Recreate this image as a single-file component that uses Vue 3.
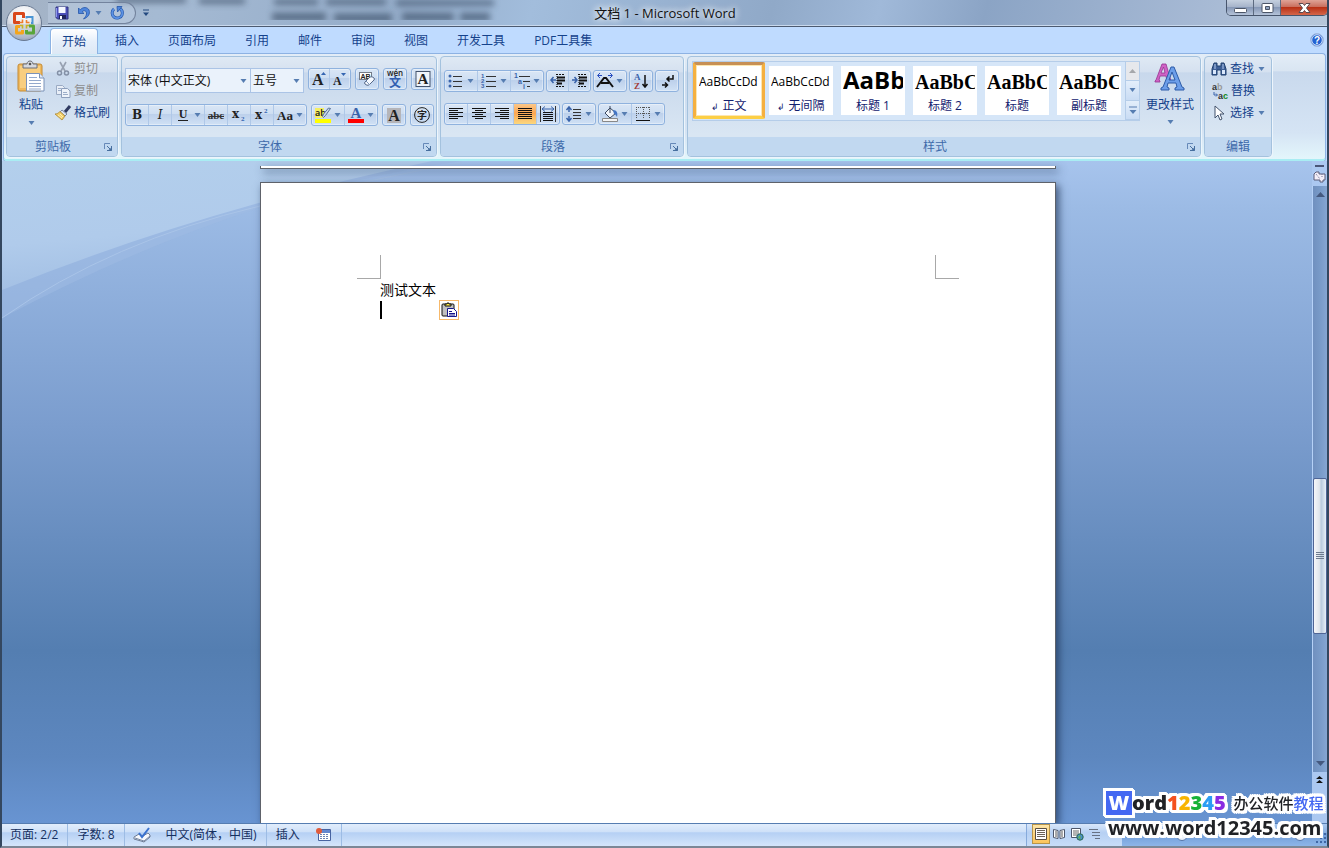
<script setup>
import { computed, h, ref } from 'vue'

// [width, height, markup]
const icons = {
  arrow: [7, 4, '<path d="M0.500 0h6L3.500 4z" fill="#567db1"/>'],
  save: [14, 14, '<path d="M1 1h12v12H2.500L1 11.500z" fill="#4b4fb8" stroke="#30347f"/><path d="M3.500 1h7v6h-7z" fill="#f4f7ff"/><path d="M4 9h7v4H4z" fill="#20265c"/><path d="M5 10h2v3H5z" fill="#fff"/><path d="M1.500 2v9" stroke="#8d97ee"/>'],
  undo: [14, 14, '<path d="M1.500 2v5.500H7L5.200 5.800C7 3.500 10 5 9.500 8c-.3 2-1.500 3.500-3 5 4.500-1.500 7-5 5.500-9C10.500 1 6 .5 3.300 3.800z" fill="#4f86dc" stroke="#2456a8" stroke-width=".8"/>'],
  redo: [14, 14, '<path d="M4 3C1.500 5 1.500 9 4 11s7 1 8-2 0-5-2-6.500" fill="none" stroke="#2456a8" stroke-width="3"/><path d="M4 3C1.500 5 1.500 9 4 11s7 1 8-2 0-5-2-6.500" fill="none" stroke="#5c92e4" stroke-width="1.800"/><path d="M7 .5h5L7.500 6z" fill="#4f86dc" stroke="#2456a8" stroke-width=".8"/>'],
  more: [8, 8, '<path d="M1 1h6" stroke="#23497f"/><path d="M1 3.500h6L4 7z" fill="#23497f"/>'],
  paste: [28, 32, '<rect x="1" y="3" width="24" height="27" rx="2" fill="#efb95e" stroke="#c48a35"/><path d="M3 5h20v22H3z" fill="#f8ce80"/><path d="M6 3h4c0-4 6-4 6 0h4v4H6z" fill="#d5d8de" stroke="#6a6f78"/><circle cx="13" cy="3" r="1.300" fill="#555"/><path d="M9.500 12.500h13l4.500 4.500v13H9.500z" fill="#fff" stroke="#7b92b8"/><path d="M22.500 12.500V17H27" fill="#dfe9f8" stroke="#7b92b8"/><path d="M12 16.500h8m-8 3h12m-12 3h12m-12 3h12m-12 2.500h12" stroke="#94a9cc"/>'],
  cut: [16, 16, '<path d="M5 1l5 9M11 1l-5 9" stroke="#98a2b2" stroke-width="1.600" fill="none"/><circle cx="4.500" cy="12" r="2" fill="none" stroke="#8390a6" stroke-width="1.500"/><circle cx="11.500" cy="12" r="2" fill="none" stroke="#8390a6" stroke-width="1.500"/>'],
  copy: [16, 16, '<path d="M1.500 2.500h6l2 2v7h-8z" fill="#e8eef7" stroke="#9aaac3"/><path d="M6.500 5.500h6l2.500 2.500v6.500H6.500z" fill="#eef3fa" stroke="#8d9fbc"/><path d="M3 5.500h3M3 7.500h3M8 9.500h4m-4 2h5" stroke="#9cadc8"/>'],
  brush: [16, 16, '<path d="M15 1l-5 6" stroke="#303b62" stroke-width="3"/><path d="M7 5l5 4-2 2-5-4z" fill="#d9e2f2" stroke="#5c6c8c" stroke-width=".8"/><path d="M5 6.500l5 4.500-3 4L0 9c2 0 3.500-1 5-2.500z" fill="#f2cd67" stroke="#a88634" stroke-width=".8"/><path d="M3 10l4 3M5 9l3 3" stroke="#fff1ad"/>'],
  grow: [14, 16, '<text x="0" y="14" font-size="16" font-weight="700" font-family="Liberation Serif" fill="#222">A</text><path d="M9 4l2.500-3L14 4z" fill="#3566b2"/>'],
  shrink: [14, 16, '<text x="0" y="14" font-size="12" font-weight="700" font-family="Liberation Serif" fill="#222">A</text><path d="M8 2h5l-2.500 3z" fill="#3566b2"/>'],
  clear: [16, 16, '<rect x=".5" y="1.500" width="12" height="7" fill="#fff" stroke="#737b88"/><text x="1.500" y="7.500" font-size="7" font-weight="700" font-family="Liberation Sans" fill="#222">AB</text><path d="M6 11l5-5q2-1 4 1 1 1 0 2l-5 5q-2 1-4-1-1-1 0-2z" fill="#f5f9ff" stroke="#566989"/><path d="M7 10l4 4" stroke="#8098ba"/>'],
  phonetic: [18, 18, '<text x="9" y="6" text-anchor="middle" font-size="8" font-weight="600" font-family="Open Sans" fill="#222">wén</text><text x="9" y="17" text-anchor="middle" font-size="12" font-weight="700" font-family="Noto Sans CJK SC" fill="#315eb0">文</text>'],
  charBorder: [16, 16, '<rect x="1" y=".5" width="14" height="15" fill="#eff4fb" stroke="#43536d"/><text x="8" y="13" text-anchor="middle" font-size="15" font-weight="700" font-family="Liberation Serif" fill="#222">A</text>'],
  bold: [16, 16, '<text x="8" y="12" text-anchor="middle" font-size="12" font-weight="700" font-family="DejaVu Serif,Liberation Serif" fill="#222">B</text>'],
  italic: [16, 16, '<text x="8" y="12" text-anchor="middle" font-size="12" font-style="italic" font-family="DejaVu Serif,Liberation Serif" fill="#222">I</text>'],
  underline: [16, 16, '<text x="8" y="11" text-anchor="middle" font-size="12" font-weight="700" font-family="Liberation Serif" fill="#222">U</text><path d="M3 13.500h10" stroke="#222" stroke-width="1"/>'],
  strike: [16, 16, '<text x="8" y="12" text-anchor="middle" font-size="11" font-weight="700" font-family="Liberation Serif" fill="#333">abc</text><path d="M0 9.500h16" stroke="#333"/>'],
  sub: [16, 16, '<text x="1" y="11" font-size="12" font-weight="700" font-family="DejaVu Serif,Liberation Serif" fill="#222">x</text><text x="10" y="14" font-size="7" font-weight="700" font-family="Liberation Serif" fill="#3566b2">2</text>'],
  sup: [16, 16, '<text x="1" y="12" font-size="12" font-weight="700" font-family="DejaVu Serif,Liberation Serif" fill="#222">x</text><text x="10" y="6" font-size="7" font-weight="700" font-family="Liberation Serif" fill="#3566b2">2</text>'],
  caseAa: [16, 16, '<text x="0" y="13" font-size="13" font-weight="700" font-family="Liberation Serif" fill="#222">Aa</text>'],
  highlight: [16, 16, '<path d="M0 1h9v10H0z" fill="#f5ef62"/><text x="0" y="9" font-size="9" font-family="Open Sans" font-weight="600" fill="#111">ab</text><path d="M15.500 1.500l-5 7-2 2-1-1 1-2.500 5-6z" fill="#c9d7ec" stroke="#566f95"/><path d="M0 12h16v4H0z" fill="#ff0"/>'],
  fontColor: [16, 16, '<text x="8" y="11" text-anchor="middle" font-size="15" font-weight="700" font-family="Liberation Serif" fill="#3963aa">A</text><path d="M0 12h16v4H0z" fill="#f00"/>'],
  shade: [16, 16, '<path d="M1 1h14v15H1z" fill="#b5b5b9"/><text x="8" y="14" text-anchor="middle" font-size="16" font-weight="700" font-family="Liberation Serif" fill="#222">A</text>'],
  circled: [16, 16, '<circle cx="8" cy="8" r="7.400" fill="none" stroke="#222"/><text x="8" y="12" text-anchor="middle" font-size="10" font-weight="700" font-family="Noto Sans CJK SC" fill="#222">字</text>'],
  bullets: [16, 16, '<g fill="#3963aa"><circle cx="2" cy="3" r="1.500"/><circle cx="2" cy="8" r="1.500"/><circle cx="2" cy="13" r="1.500"/></g><path d="M5 3.500h9m-9 5h9m-9 5h9" stroke="#333"/>'],
  numbers: [16, 16, '<g font-size="6" font-weight="700" font-family="Liberation Sans" fill="#3963aa"><text y="5">1</text><text y="10">2</text><text y="15">3</text></g><path d="M5 3.500h10m-10 5h10m-10 5h10" stroke="#333"/>'],
  multi: [16, 16, '<g font-size="7" font-weight="700" font-family="Liberation Sans" fill="#3963aa"><text y="5">1</text><text x="4" y="11">a</text><text x="9" y="16">i</text></g><path d="M5 3.500h11m-7 5h7m-3 5h3" stroke="#333"/>'],
  outdent: [15, 16, '<path d="M6 1.500h9M6 13.500h9" stroke="#111" stroke-dasharray="2 1"/><path d="M7 4.500h8M7 7.500h8M7 10.500h5" stroke="#111" stroke-width="2"/><path d="M7 1v14" stroke="#111" stroke-dasharray="1 1"/><path d="M6 7H1m2.500-3L1 7l2.500 3" stroke="#3963aa" stroke-width="1.500" fill="none"/>'],
  indent: [15, 16, '<path d="M6 1.500h9M6 13.500h9" stroke="#111" stroke-dasharray="2 1"/><path d="M7 4.500h8M7 7.500h8M7 10.500h5" stroke="#111" stroke-width="2"/><path d="M7 1v14" stroke="#111" stroke-dasharray="1 1"/><path d="M0 7h5M2.500 4L5 7l-2.500 3" stroke="#3963aa" stroke-width="1.500" fill="none"/>'],
  scaleText: [16, 16, '<path d="M0 14L7 5h2l7 9M4 10h8" stroke="#111" stroke-width="2" fill="none"/><path d="M1 2.500h4M3 0L.5 2.500 3 5M11 2.500h4M13 0l2.500 2.500L13 5" stroke="#264cc0" fill="none"/>'],
  sort: [16, 16, '<text x="1" y="7" font-size="9" font-family="Liberation Serif" font-weight="700" fill="#3963aa">A</text><text x="1" y="16" font-size="9" font-family="Liberation Serif" font-weight="700" fill="#a33c38">Z</text><path d="M12 2v12m-2.500-3l2.500 3 2.500-3" stroke="#111" stroke-width="1.500" fill="none"/>'],
  marks: [16, 16, '<path d="M14 2v4H8m2.500-2.500L8 6l2.500 2.500" stroke="#111" stroke-width="1.500" fill="none"/><path d="M3 12h5M6 9.500L8.500 12 6 14.500" stroke="#111" stroke-width="1.500" fill="none"/>'],
  left: [16, 16, '<path d="M1 2.500h14m-14 2h9m-9 2h14m-14 2h9m-9 2h14m-14 2h9" stroke="#111"/>'],
  center: [16, 16, '<path d="M1 2.500h14m-11 2h8m-11 2h14m-11 2h8m-11 2h14m-11 2h8" stroke="#111"/>'],
  right: [16, 16, '<path d="M1 2.500h14m-9 2h9m-14 2h14m-9 2h9m-14 2h14m-9 2h9" stroke="#111"/>'],
  justify: [16, 16, '<path d="M1 2.500h14m-14 2h14m-14 2h14m-14 2h14m-14 2h14m-14 2h14" stroke="#111"/>'],
  distribute: [16, 16, '<path d="M.5 0v16M15.500 0v16" stroke="#333"/><path d="M2 3h12M5 .5L2 3l3 2.500M11 .5L14 3l-3 2.500" stroke="#3963aa" fill="none"/><path d="M3 6.500h10m-10 2h10m-10 2h10m-10 2h10m-10 2h10" stroke="#111"/>'],
  spacing: [16, 16, '<path d="M3 1v5M3 10v5M.5 4L3 1l2.500 3M.5 12L3 15l2.500-3" stroke="#3963aa" stroke-width="1.500" fill="none"/><path d="M7 3.500h8m-8 3h8m-8 3h8m-8 3h8" stroke="#333"/>'],
  bucket: [16, 16, '<path d="M8 2l6 5-6 5-5-5z" fill="#f0f4fa" stroke="#3b4960"/><path d="M8 7V0" stroke="#3b4960"/><path d="M11 4c4 0 5 3 4 7-1-2-2-3-3-3z" fill="#4576c4"/><path d="M.5 12.500h15v3H.5z" fill="#f4f4f4" stroke="#888"/>'],
  borders: [16, 16, '<path d="M1 1.500h14M1 7.500h14M1.500 1v12M8.500 1v12M14.500 1v12" stroke="#555" stroke-dasharray="1 1"/><path d="M1 14.500h14" stroke="#111"/>'],
  changeStyles: [30, 28, '<path d="M0 19v-1l1-1L7 1h4l5 17h-4l-1-5H5l-1 4 1 1v1zM6 10h4L8.500 4z" fill="#cf62c5" stroke="#96348f" stroke-width=".8"/><path d="M6 27v-2l2-1L16 4h3l8 20 2 1v2h-9v-2l2-1-1-4h-8l-1 4 2 1v2zM14 17h6l-3-8z" fill="#6c9ee9" stroke="#2c5ba8"/>'],
  find: [16, 16, '<path d="M3 2h3v3h4V2h3l2 6v6h-5V9H6v5H1V8z" fill="#3d5e96" stroke="#21406f"/><path d="M2 9h3v4H2zM11 9h3v4h-3z" fill="#d9e7fb"/><path d="M4 3v5M12 3v5" stroke="#b7cdf0"/>'],
  replace: [16, 16, '<g font-family="Liberation Sans" font-weight="700" font-size="9"><text x="0" y="7"><tspan fill="#333">a</tspan><tspan fill="#999">b</tspan></text><text x="6" y="16"><tspan fill="#333">a</tspan><tspan fill="#158a24">c</tspan></text></g><path d="M2 9v3h3M4 10.500L5.500 12 4 13.500" fill="none" stroke="#3963aa"/>'],
  select: [16, 16, '<path d="M4 1v12l3-3 2 5 2-1-2-5h4z" fill="#fff" stroke="#43536d"/>'],
  up: [7, 4, '<path d="M0 4h7L3.500 0z" fill="#a5a7ab"/>'],
  galleryMore: [8, 8, '<path d="M0 1h8" stroke="#567db1"/><path d="M.5 4h7L4 8z" fill="#567db1"/>'],
  launcher: [8, 8, '<path d="M.5 6V.5H6" stroke="#6689b8" fill="none"/><path d="M3 3l3 3M7.500 3v4.500H3" stroke="#476f9f" fill="none"/><path d="M4 7.500h4V4z" fill="#476f9f"/>'],
  help: [14, 14, '<circle cx="7" cy="7" r="6.400" fill="#2463d2" stroke="#a9bedf"/><circle cx="7" cy="7" r="5.300" fill="none" stroke="#fff" stroke-width=".8"/><text x="7" y="11" text-anchor="middle" font-size="10" font-weight="700" font-family="Liberation Sans" fill="#fff">?</text>'],
  proof: [16, 16, '<path d="M0 10l5-3 4 2 5-3 2 2v2l-6 5-3-1-7-2z" fill="#f7f9fd" stroke="#6d7b94"/><path d="M1 11l6 2 3 1 6-5" fill="none" stroke="#7889a5"/><path d="M5 6l3 4 7-9" fill="none" stroke="#3a72cf" stroke-width="2"/>'],
  macro: [16, 14, '<path d="M2.500 1.500h12v11h-12z" fill="#fff" stroke="#4864a1"/><path d="M3 2h11v3H3z" fill="#6387cf"/><path d="M4 6.500h9m-9 2h9m-9 2h9" stroke="#6d83b4" stroke-dasharray="2 1"/><circle cx="3" cy="3" r="3" fill="#e05c3c"/>'],
  viewPrint: [14, 14, '<path d="M1.500 1.500h11v11h-11z" fill="#fff" stroke="#594e42"/><path d="M3 3.500h8m-8 2h8m-8 2h8m-8 2h8" stroke="#6b6258"/>'],
  viewRead: [14, 14, '<path d="M1.500 2.500L6 3.500v8l-4.500-1zM12.500 2.500L8 3.500v8l4.500-1z" fill="#fff" stroke="#4d566a"/><path d="M3 5h2m-2 2h2m-2 2h2m4-4h2m-2 2h2m-2 2h2" stroke="#555"/>'],
  viewWeb: [14, 14, '<path d="M1.500 1.500h9v9h-9z" fill="#fff" stroke="#4d566a"/><path d="M3 4h6M3 6h6M3 8h4" stroke="#666"/><circle cx="10" cy="10" r="3.200" fill="#4a8ccb" stroke="#276a4c"/><path d="M8 10l2-2 1 3-2 1z" fill="#62b459"/>'],
  viewOutline: [14, 14, '<path d="M1 2.500h9m-6 3h8m-8 3h8m-5 3h5" stroke="#667184"/>'],
  pasteTag: [16, 16, '<rect x="1" y="2" width="12" height="12" rx="1" fill="#c0c0c0" stroke="#111"/><path d="M4 2h2l1-1.500L8 2h2v2H4z" fill="#ffe94a" stroke="#111"/><path d="M6.500 6.500h6l3 3v5h-9z" fill="#fff" stroke="#16168c"/><path d="M8 9.500h3m-3 2h6m-6 1.500h6" stroke="#16168c"/>'],
  ruler: [13, 12, '<path d="M1 3l2-2h3v2h6v6h-2v2H7V9H1z" fill="#f3eef8" stroke="#5b5d78"/><path d="M3 3l4 5M9 3v3" stroke="#77779a" stroke-dasharray="1 1"/>'],
  scrollUp: [9, 5, '<path d="M0 5h9L4.500 0z" fill="#45597f"/>'],
  scrollDown: [9, 5, '<path d="M0 0h9L4.500 5z" fill="#45597f"/>'],
  prevPage: [7, 8, '<path d="M3.500 0L7 3H0zM3.500 4L7 7H0z" fill="#111"/>'],
  minus: [14, 14, '<circle cx="7" cy="7" r="5.500" fill="#eef4fd" stroke="#5474a8"/><path d="M4 7h6" stroke="#35538a"/>'],
  plus: [14, 14, '<circle cx="7" cy="7" r="5.500" fill="#eef4fd" stroke="#5474a8"/><path d="M4 7h6M7 4v6" stroke="#35538a"/>'],
  grip: [11, 11, '<g fill="#3f67a5"><path d="M8 0h2v2H8zM4 4h2v2H4zM8 4h2v2H8zM0 8h2v2H0zM4 8h2v2H4zM8 8h2v2H8z"/></g>'],
  minimize: [13, 12, '<rect x=".5" y="6.500" width="12" height="4" rx="1" fill="#fff" stroke="#4b5567"/>'],
  maximize: [13, 12, '<rect x="1" y="1.500" width="11" height="9" rx="1" fill="#fff" stroke="#4b5567"/><path d="M4.500 4.500h4v3h-4z" fill="#8fa2bf" stroke="#4b5567"/>'],
  close: [13, 12, '<path d="M1 1.500h4l1.500 2 1.500-2h4L8.500 6l3.500 4.500H8l-1.500-2-1.500 2H1L4.500 6z" fill="#fff" stroke="#5b4a50"/>']
}

const Icon = ({ name }) => {
  const [width, height, body] = icons[name]
  return h('svg', { width, height, viewBox: `0 0 ${width} ${height}`, 'aria-hidden': true, innerHTML: body })
}
Icon.props = ['name']

const tabs = ['开始', '插入', '页面布局', '引用', '邮件', '审阅', '视图', '开发工具', 'PDF工具集']
const activeTab = ref('开始')

const fontName = ref('宋体 (中文正文)')
const fontSize = ref('五号')
const alignment = ref('justify')

// 每个子数组是一组相连的按钮，带 * 的有下拉箭头
const parse = (row) => row.map((group) => group.split(' ').map((item) => ({
  icon: item.replace('*', ''),
  drop: item.endsWith('*')
})))
const fontRow1 = parse(['grow shrink', 'clear', 'phonetic', 'charBorder'])
const fontRow2 = parse(['bold italic underline* strike sub sup caseAa*', 'highlight* fontColor*', 'shade', 'circled'])
const paraRow1 = parse(['bullets* numbers* multi*', 'outdent indent', 'scaleText*', 'sort', 'marks'])
const paraRow2 = parse(['left center right justify distribute', 'spacing*', 'bucket* borders*'])
const alignNames = ['left', 'center', 'right', 'justify', 'distribute']

const setAlign = (icon) => {
  if (alignNames.includes(icon)) alignment.value = icon
}

const styleList = [
  { name: '正文', sample: 'AaBbCcDd', kind: 'body', mark: true },
  { name: '无间隔', sample: 'AaBbCcDd', kind: 'body', mark: true },
  { name: '标题 1', sample: 'AaBb', kind: 'h1' },
  { name: '标题 2', sample: 'AaBbC', kind: 'h2' },
  { name: '标题', sample: 'AaBbC', kind: 'h2' },
  { name: '副标题', sample: 'AaBbC', kind: 'h2' }
]
const activeStyle = ref('正文')

const views = ['viewPrint', 'viewRead', 'viewWeb', 'viewOutline']
const activeView = ref('viewPrint')
const docName = ref('文档 1')
const title = computed(() => `${docName.value} - Microsoft Word`)
</script>

<template>
  <div class="window">
    <header class="titlebar">
      <svg class="glass" width="500" height="26" aria-hidden="true">
        <defs><filter id="soft"><feGaussianBlur stdDeviation="3" /></filter></defs>
        <g filter="url(#soft)" stroke="#35465f" fill="none" opacity="0.6">
          <path d="M100 0h70M183 1h46M258 2h44M310 2h60M380 3h34M414 3h64" stroke-width="6" />
          <path d="M256 17h54M318 18h58M386 17h52M444 17h30" stroke-width="9" />
        </g>
      </svg>
      <button type="button" class="orb" aria-label="Office">
        <svg width="38" height="38" viewBox="0 0 38 38">
          <defs>
            <radialGradient id="orb" cx=".5" cy=".25" r=".8">
              <stop offset="0" stop-color="#fff" /><stop offset=".55" stop-color="#dfe3ea" /><stop offset="1" stop-color="#8d9bb3" />
            </radialGradient>
          </defs>
          <circle cx="19" cy="19" r="17.500" fill="url(#orb)" stroke="#677891" />
          <path d="M3 20h32a16 14 0 0 1-32 0" fill="#aeb9ca" opacity=".45" />
          <g fill="none">
            <path d="M15 18.500H9.500v-9h9v4.500" stroke="#d9481c" stroke-width="3" stroke-linejoin="round" />
            <path d="M21.500 14.500v-1.500h6v6h-1.500" stroke="#4b95d4" stroke-width="2" />
            <path d="M15 22.500h-3.500v6.500h6v-3" stroke="#f3a51d" stroke-width="3" stroke-linejoin="round" />
            <path d="M24 22h4.500v7h-7v-3" stroke="#58a63a" stroke-width="3" stroke-linejoin="round" />
            <path d="M14.500 18.500h3v-3M21.500 16v2.500h3" stroke="#ef7d2c" stroke-width="1.600" />
            <path d="M15 21.500h2.500v3M24 21.500h-2.500v3" stroke="#c9b322" stroke-width="1.600" />
          </g>
        </svg>
      </button>
      <div class="quick">
        <button type="button" aria-label="保存"><Icon name="save" /></button>
        <button type="button" aria-label="撤消"><Icon name="undo" /><Icon name="arrow" /></button>
        <button type="button" aria-label="重复"><Icon name="redo" /></button>
      </div>
      <button type="button" class="quick-more" aria-label="自定义快速访问工具栏"><Icon name="more" /></button>
      <h1 class="title">{{ title }}</h1>
      <div class="win-buttons">
        <button type="button" aria-label="最小化"><Icon name="minimize" /></button>
        <button type="button" aria-label="最大化"><Icon name="maximize" /></button>
        <button type="button" class="close" aria-label="关闭"><Icon name="close" /></button>
      </div>
    </header>

    <nav class="tabs">
      <button
        v-for="tab in tabs"
        :key="tab"
        type="button"
        class="tab"
        :class="{ active: tab === activeTab }"
        @click="activeTab = tab"
      >{{ tab }}</button>
      <button type="button" class="help" aria-label="帮助"><Icon name="help" /></button>
    </nav>

    <div class="ribbon">
      <section class="group clipboard">
        <div class="group-body">
          <button type="button" class="big-btn"><Icon name="paste" /><span>粘贴</span><Icon name="arrow" /></button>
          <div class="stack">
            <button type="button" class="line-btn" disabled><Icon name="cut" />剪切</button>
            <button type="button" class="line-btn" disabled><Icon name="copy" />复制</button>
            <button type="button" class="line-btn"><Icon name="brush" />格式刷</button>
          </div>
        </div>
        <footer><span>剪贴板</span><button type="button" aria-label="剪贴板选项"><Icon name="launcher" /></button></footer>
      </section>

      <section class="group font">
        <div class="group-body rows">
          <div class="row">
            <div class="combos">
              <div class="combo name">
                <select v-model="fontName" aria-label="字体"><option>宋体 (中文正文)</option><option>黑体</option></select>
                <Icon name="arrow" />
              </div>
              <div class="combo size">
                <select v-model="fontSize" aria-label="字号"><option>五号</option><option>四号</option></select>
                <Icon name="arrow" />
              </div>
            </div>
            <div v-for="(group, i) in fontRow1" :key="i" class="cluster">
              <button v-for="b in group" :key="b.icon" type="button" :aria-label="b.icon"><Icon :name="b.icon" /></button>
            </div>
          </div>
          <div class="row">
            <div v-for="(group, i) in fontRow2" :key="i" class="cluster">
              <button v-for="b in group" :key="b.icon" type="button" :aria-label="b.icon">
                <Icon :name="b.icon" /><Icon v-if="b.drop" name="arrow" />
              </button>
            </div>
          </div>
        </div>
        <footer><span>字体</span><button type="button" aria-label="字体选项"><Icon name="launcher" /></button></footer>
      </section>

      <section class="group para">
        <div class="group-body rows">
          <div v-for="(row, r) in [paraRow1, paraRow2]" :key="r" class="row">
            <div v-for="(group, i) in row" :key="i" class="cluster">
              <button
                v-for="b in group"
                :key="b.icon"
                type="button"
                :class="{ on: b.icon === alignment }"
                :aria-label="b.icon"
                @click="setAlign(b.icon)"
              >
                <Icon :name="b.icon" /><Icon v-if="b.drop" name="arrow" />
              </button>
            </div>
          </div>
        </div>
        <footer><span>段落</span><button type="button" aria-label="段落选项"><Icon name="launcher" /></button></footer>
      </section>

      <section class="group styles">
        <div class="group-body">
          <div class="gallery">
            <button
              v-for="s in styleList"
              :key="s.name"
              type="button"
              class="style-item"
              :class="{ selected: s.name === activeStyle }"
              @click="activeStyle = s.name"
            >
              <span class="sheet">
                <span class="sample" :class="s.kind">{{ s.sample }}</span>
                <span class="style-name"><small v-if="s.mark">↲</small>{{ s.name }}</span>
              </span>
            </button>
            <div class="gallery-nav">
              <button type="button" disabled aria-label="上一行"><Icon name="up" /></button>
              <button type="button" aria-label="下一行"><Icon name="arrow" /></button>
              <button type="button" aria-label="其他"><Icon name="galleryMore" /></button>
            </div>
          </div>
          <button type="button" class="big-btn"><Icon name="changeStyles" /><span>更改样式</span><Icon name="arrow" /></button>
        </div>
        <footer><span>样式</span><button type="button" aria-label="样式选项"><Icon name="launcher" /></button></footer>
      </section>

      <section class="group edit">
        <div class="group-body">
          <div class="stack">
            <button type="button" class="line-btn"><Icon name="find" />查找<Icon name="arrow" /></button>
            <button type="button" class="line-btn"><Icon name="replace" />替换</button>
            <button type="button" class="line-btn"><Icon name="select" />选择<Icon name="arrow" /></button>
          </div>
        </div>
        <footer><span>编辑</span></footer>
      </section>
    </div>

    <main class="workspace">
      <svg class="swoosh" width="460" height="200" aria-hidden="true">
        <defs>
          <linearGradient id="sky" x1="0" y1="0" x2="0.300" y2="1">
            <stop offset="0" stop-color="#b3cfec" /><stop offset=".6" stop-color="#b0cbeb" /><stop offset="1" stop-color="#a1bee3" />
          </linearGradient>
        </defs>
        <path d="M0 0h460Q240 30 0 157z" fill="#9fbce3" opacity=".5" />
        <path d="M0 0h430Q200 48 0 129z" fill="url(#sky)" />
        <path d="M0 157Q110 80 258 45T460 2" fill="none" stroke="#a9c4e8" />
      </svg>
      <div class="canvas">
        <div class="page previous"></div>
        <article class="page current">
          <div class="crop-marks"><i></i><i></i></div>
          <div class="page-text">
            <p>测试文本</p>
            <div class="caret-line">
              <i class="caret"></i>
              <button type="button" class="paste-tag" aria-label="粘贴选项"><Icon name="pasteTag" /></button>
            </div>
          </div>
        </article>
      </div>
      <div class="scrollbar">
        <i class="split"></i>
        <button type="button" aria-label="标尺"><Icon name="ruler" /></button>
        <div class="track">
          <button type="button" aria-label="向上滚动"><Icon name="scrollUp" /></button>
          <div class="space above"></div>
          <div class="thumb"><i></i><i></i><i></i><i></i></div>
          <div class="space below"></div>
          <button type="button" aria-label="向下滚动"><Icon name="scrollDown" /></button>
        </div>
        <div class="browse"><button type="button" aria-label="前一页"><Icon name="prevPage" /></button></div>
      </div>
    </main>

    <footer class="status">
      <span class="cell">页面: 2/2</span>
      <span class="cell">字数: 8</span>
      <span class="cell icon-cell"><Icon name="proof" />中文(简体，中国)</span>
      <span class="cell icon-cell">插入<Icon name="macro" /></span>
      <div class="status-right">
        <div class="views">
          <button
            v-for="v in views"
            :key="v"
            type="button"
            :class="{ on: v === activeView }"
            :aria-label="v"
            @click="activeView = v"
          ><Icon :name="v" /></button>
        </div>
        <div class="zoom">
          <button type="button" aria-label="缩小"><Icon name="minus" /></button>
          <button type="button" aria-label="放大"><Icon name="plus" /></button>
        </div>
        <Icon name="grip" class="grip" />
      </div>
    </footer>

    <aside class="brand">
      <div class="brand-top">
        <b class="w">W</b><b>ord</b><b class="n1">1</b><b class="n2">2</b><b class="n3">3</b><b class="n4">4</b><b class="n5">5</b>
        <span class="slogan">办公软件<em>教程</em></span>
      </div>
      <div class="brand-url">www.word12345.com</div>
    </aside>
  </div>
</template>

<style>
body {
  margin: 0;
}
</style>

<style scoped>
.window {
  position: relative;
  display: flex;
  flex-direction: column;
  box-sizing: border-box;
  min-height: 100vh;
  border: solid #34475f;
  border-width: 0 2px 2px;
  border-bottom-color: #7c8796;
  background: #bfdbff;
  font: 12px/16px "Open Sans", "Noto Sans CJK SC", sans-serif;
  color: #15428b;
  overflow: hidden;
}
button {
  display: flex;
  align-items: center;
  justify-content: center;
  padding: 0;
  border: 0;
  background: none;
  font: inherit;
  color: inherit;
  white-space: nowrap;
}
svg {
  flex: none;
  overflow: visible;
}

/* 标题栏 */
.titlebar {
  position: relative;
  display: flex;
  align-items: center;
  box-sizing: border-box;
  height: 27px;
  margin: 0 -2px;
  padding-left: 48px;
  border-bottom: 1px solid #4c5a70;
  background: linear-gradient(105deg, #a3b1c3 0, #a5bad3 12%, #94acc9 30%, #a2bddc 40%, #90a9c8 58%, #a0b9d9 66%, #8ba4c5 74%, #a6b9d4 90%, #b7c7da 100%);
  box-shadow: inset 0 -1px #c9d9ed;
}
.glass {
  position: absolute;
  left: 16px;
  top: 0;
  overflow: hidden;
}
.orb {
  position: absolute;
  left: 5px;
  top: 4px;
  z-index: 3;
}
.quick {
  position: relative;
  display: flex;
  align-items: center;
  gap: 8px;
  box-sizing: border-box;
  height: 22px;
  padding: 0 11px 0 7px;
  border: 1px solid #73839d;
  border-left: 0;
  border-radius: 0 11px 11px 0;
  background: rgba(203, 218, 239, 0.35);
}
.quick button {
  gap: 4px;
}
.quick-more {
  position: relative;
  margin-left: 6px;
}
.title {
  flex: 1;
  margin: 0;
  padding-right: 46px;
  font-size: 13px;
  font-weight: 400;
  text-align: center;
  color: #111;
  text-shadow: 0 0 6px #fff, 0 0 8px #fff;
}
.win-buttons {
  display: flex;
  align-self: flex-start;
  margin-right: 1px;
  border: 1px solid #47556c;
  border-top: 0;
  border-radius: 0 0 5px 5px;
  overflow: hidden;
}
.win-buttons button {
  width: 27px;
  height: 15px;
  border-right: 1px solid #5c6a80;
  background: linear-gradient(#c5d0df, #a3b1c8 50%, #8799b7 50%, #b5c3d9);
  box-sizing: border-box;
}
.win-buttons .close {
  width: 46px;
  border-right: 0;
  background: linear-gradient(#dfa397, #c76a58 50%, #b93116 50%, #d4664a);
}

/* 选项卡 */
.tabs {
  display: flex;
  align-items: flex-end;
  gap: 5px;
  height: 26px;
  padding: 0 3px 0 48px;
}
.tab {
  height: 25px;
  padding: 0 12px;
}
.tab.active {
  position: relative;
  z-index: 1;
  box-sizing: border-box;
  height: 26px;
  padding: 0 11px;
  margin-bottom: -1px;
  border: 1px solid #8db2e3;
  border-bottom: 0;
  border-radius: 4px 4px 0 0;
  background: linear-gradient(#fff, #e6effa 50%, #dde8f5);
  box-shadow: inset 1px 1px #fff, 0 0 3px #a8e8fa;
}
.help {
  align-self: center;
  margin-left: auto;
}

/* 功能区 */
.ribbon {
  display: flex;
  gap: 3px;
  margin: 0 1px;
  padding: 2px;
  border: 1px solid #8db2e3;
  border-bottom: 2px solid #a9edf3;
  border-radius: 4px;
  background: linear-gradient(#e3edf7, #d9e5f2 16%, #c9d9ed 17%, #d5e4f4 75%, #e3f6fb);
  box-shadow: 0 1px #83a4c8;
}
.group {
  display: flex;
  flex-direction: column;
  box-sizing: border-box;
  height: 101px;
  flex: none;
  border: 1px solid #a4c2de;
  border-radius: 4px;
  background: linear-gradient(#dfe9f4, #d5e1f0 15%, #c8d8ec 16%, #d9e6f3 78%);
  box-shadow: 1px 1px #edf5fc;
  overflow: hidden;
}
.clipboard { width: 112px; }
.font { width: 316px; }
.para { width: 244px; }
.styles { width: 514px; }
.edit { width: 68px; }
.group-body {
  flex: 1;
  display: flex;
  align-items: flex-start;
  min-height: 0;
}
.group footer {
  display: flex;
  align-items: center;
  height: 19px;
  background: #c1d8f0;
  color: #3e6aaa;
}
.group footer span {
  flex: 1;
  text-align: center;
}
.group footer button {
  width: 18px;
}
.big-btn {
  flex-direction: column;
  gap: 4px;
}
.big-btn svg:last-child {
  margin-top: 4px;
}
.clipboard .big-btn {
  padding: 4px 0 0 10px;
}
.stack {
  padding-top: 1px;
}
.clipboard .stack {
  padding-left: 9px;
}
.line-btn {
  gap: 3px;
  height: 22px;
}
.line-btn:disabled {
  color: #8d8d8d;
}
.line-btn svg:last-child {
  margin-left: 1px;
}
.rows {
  flex-direction: column;
  gap: 11px;
  padding: 11px 3px 0;
}
.para .rows {
  padding-top: 13px;
}
.row {
  display: flex;
  gap: 4px;
}
.para .row {
  gap: 2px;
}
.combos {
  display: flex;
}
.combo {
  display: grid;
  align-items: center;
  box-sizing: border-box;
  height: 25px;
  border: 1px solid #abc4e6;
  background: #eaf2fb;
}
.combo.name { width: 126px; }
.combo.size { width: 53px; border-left: 0; }
.combo select,
.combo svg {
  grid-area: 1 / 1;
}
.combo select {
  width: 100%;
  height: 23px;
  padding: 0 14px 0 2px;
  border: 0;
  appearance: none;
  background: none;
  font: inherit;
  color: #111;
}
.combo svg {
  justify-self: end;
  margin-right: 3px;
  pointer-events: none;
}
.cluster {
  display: flex;
  box-sizing: border-box;
  height: 22px;
  border: 1px solid #8fb2de;
  border-radius: 3px;
  background: linear-gradient(#dae6f5, #cddef2 45%, #bcd0eb 46%, #d0e1f5);
  box-shadow: inset 0 0 0 1px rgba(255, 255, 255, 0.35);
}
.cluster button {
  gap: 3px;
  padding: 0 3px;
}
.cluster button + button {
  border-left: 1px solid #afc8e8;
}
.cluster button.on {
  background: linear-gradient(#fbc788, #fba652 45%, #fbd77f);
}
.cluster button:has([width="18"]) {
  padding: 0 2px;
}

/* 样式库 */
.gallery {
  display: flex;
  box-sizing: border-box;
  height: 60px;
  margin: 4px 0 0 4px;
  border: 1px solid #b5cde9;
  background: #d6e6f8;
}
.style-item {
  box-sizing: border-box;
  width: 72px;
  height: 57px;
  border: 4px solid transparent;
}
.style-item.selected {
  border: 3px solid #f5b040;
  border-top-color: #c79055;
  border-bottom-color: #fccf45;
  border-radius: 2px;
  background: #fde6b0;
}
.sheet {
  display: flex;
  flex-direction: column;
  width: 64px;
  height: 49px;
  background: #fff;
  overflow: hidden;
}
.sample {
  height: 32px;
  margin: 0 2px;
  line-height: 32px;
  text-align: left;
  color: #000;
  overflow: hidden;
}
.sample.h1 {
  font-size: 24px;
  font-weight: 700;
  line-height: 28px;
}
.sample.h2 {
  font: 700 20px/32px "Liberation Serif", serif;
}
.style-name {
  line-height: 16px;
  text-align: center;
  color: #12206e;
}
.style-name small {
  margin-right: 3px;
  font-size: 9px;
}
.gallery-nav {
  display: flex;
  flex-direction: column;
  width: 14px;
}
.gallery-nav button {
  flex: 1;
  border: 1px solid #b5cde9;
  border-width: 0 0 1px 1px;
  background: linear-gradient(#e3eefb, #c9dcf4);
}
.gallery-nav button:disabled {
  background: #e6e8ec;
}
.styles .big-btn {
  flex: 1;
  gap: 6px;
  padding-top: 6px;
}
.styles .big-btn svg:last-child {
  margin-top: 1px;
}
.edit .stack {
  padding-left: 6px;
}

/* 文档区 */
.workspace {
  position: relative;
  flex: 1;
  display: flex;
  min-height: 400px;
  background: linear-gradient(#a7c4ed 0, #9cbbe5 7%, #7b9dce 40%, #547eb1 74%, #5d87bf 90%, #6894d2 100%);
}
.swoosh {
  position: absolute;
  left: 0;
  top: 0;
}
.canvas {
  position: relative;
  flex: 1;
  display: flex;
  flex-direction: column;
  align-items: center;
  padding: 5px 0 0 2px;
  overflow: hidden;
}
.page {
  box-sizing: border-box;
  width: 796px;
  max-width: 100%;
  border: 1px solid #5e626a;
  background: #fff;
  box-shadow: 3px 3px 8px rgba(25, 45, 80, 0.7);
}
.page.previous {
  height: 3px;
  border-top: 0;
}
.page.current {
  flex: 1;
  margin-top: 13px;
  padding: 72px 96px 0;
  border-bottom: 0;
}
.crop-marks {
  display: flex;
  justify-content: space-between;
}
.crop-marks i {
  box-sizing: border-box;
  width: 24px;
  height: 24px;
  border: solid #a8a8a8;
  border-width: 0 1px 1px 0;
}
.crop-marks i:last-child {
  border-width: 0 0 1px 1px;
}
.page-text {
  padding: 0 23px;
  font: 14px/21px "Noto Sans CJK SC", sans-serif;
  color: #000;
}
.page-text p {
  margin: 0;
}
.caret-line {
  display: flex;
  align-items: center;
  gap: 57px;
}
.caret {
  width: 2px;
  height: 18px;
  background: #000;
}
.paste-tag {
  width: 20px;
  height: 20px;
  border: 1px solid #f7b96b;
  background: #fff;
}

/* 滚动条 */
.scrollbar {
  display: flex;
  flex-direction: column;
  align-items: center;
  flex: none;
  width: 15px;
  padding-top: 4px;
  background: #abc8f1;
}
.split {
  width: 9px;
  height: 2px;
  margin-bottom: 4px;
  background: #4a5678;
}
.track {
  flex: 1;
  display: flex;
  flex-direction: column;
  align-items: center;
  box-sizing: border-box;
  width: 100%;
  margin-top: 3px;
  border-left: 1px solid #b5d1f7;
  background: linear-gradient(90deg, #7090bf, #789ac8 50%, #86a6d2);
}
.track button {
  width: 14px;
  height: 16px;
}
.above { flex: 278; }
.below { flex: 123; }
.thumb {
  flex: 156;
  display: flex;
  flex-direction: column;
  align-items: center;
  justify-content: center;
  gap: 1px;
  box-sizing: border-box;
  width: 14px;
  border: 1px solid #4f6596;
  border-radius: 2px;
  background: linear-gradient(90deg, #f5f6f9, #dfe5ec 45%, #b9cadd 60%, #e8eff8);
}
.thumb i {
  width: 8px;
  height: 1px;
  background: #6e7b8f;
}
.browse {
  height: 47px;
  padding-top: 4px;
}

/* 状态栏 */
.status {
  display: flex;
  box-sizing: border-box;
  height: 23px;
  border-top: 1px solid #567db1;
  background: linear-gradient(#e2edfc, #cfe1f8 35%, #b5d0f4 40%, #d5e5fa);
  color: #15305f;
}
.cell {
  display: flex;
  align-items: center;
  padding: 0 9px;
  border-right: 1px solid #9dbce4;
}
.cell:first-child {
  padding-left: 8px;
}
.icon-cell {
  gap: 16px;
}
.status-right {
  display: flex;
  align-items: center;
  box-sizing: border-box;
  width: 301px;
  margin-left: auto;
  border-left: 1px solid #86aadb;
  background: linear-gradient(#a9c8f0, #86ade0 40%, #6f9cd8 42%, #8db5e8);
}
.views {
  display: flex;
  width: 90px;
  height: 100%;
  padding-left: 5px;
  background: linear-gradient(#d9e7fa, #b6d0f3 40%, #c8ddf8);
}
.views button {
  box-sizing: border-box;
  width: 18px;
  height: 20px;
}
.views button.on {
  border: 1px solid #b8954a;
  background: linear-gradient(#fde5a8, #fbc45a);
}
.zoom {
  display: flex;
  justify-content: space-between;
  width: 132px;
  margin-left: 53px;
}
.grip {
  align-self: flex-end;
  margin: 0 0 2px auto;
}

/* 右下角水印 */
.brand {
  position: absolute;
  right: 0;
  bottom: 5px;
  width: 224px;
  color: #202226;
  filter: drop-shadow(2px 0 0 #fff) drop-shadow(-2px 0 0 #fff) drop-shadow(0 2px 0 #fff) drop-shadow(0 -2px 0 #fff) drop-shadow(1px 1px 0 #fff) drop-shadow(-1px -1px 0 #fff);
}
.brand-top {
  display: flex;
  align-items: center;
  padding-left: 3px;
  font: 700 20px/24px "Open Sans", sans-serif;
}
.brand-top .w {
  width: 26px;
  background: #4468f2;
  color: #fff;
  text-align: center;
}
.n1 { color: #f4511e; }
.n2 { color: #f8b400; }
.n3 { color: #16b238; }
.n4 { color: #2b9df4; }
.n5 { color: #8a2be2; }
.slogan {
  margin-left: 8px;
  font: 500 15px/24px "Noto Sans CJK SC", sans-serif;
  white-space: nowrap;
}
.slogan em {
  font-style: normal;
  color: #4468f2;
}
.brand-url {
  padding-left: 5px;
  font: 700 20px/26px "Open Sans", sans-serif;
}
</style>
